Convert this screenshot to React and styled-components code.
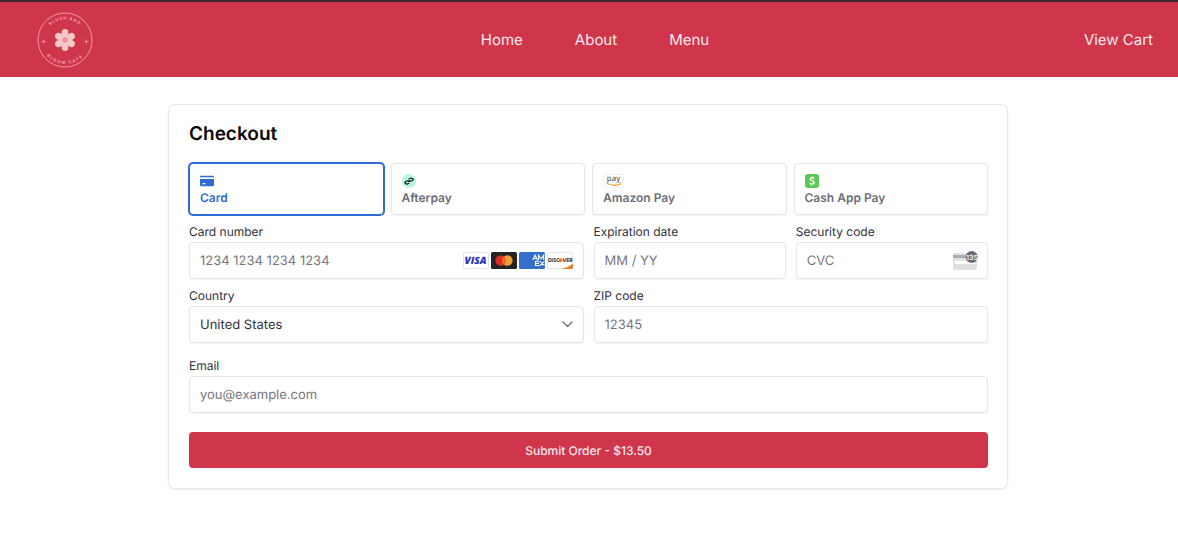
import React, { useState } from 'react';
import styled, { createGlobalStyle } from 'styled-components';

const GlobalStyle = createGlobalStyle`
  * { box-sizing: border-box; }
  body {
    margin: 0;
    background: #fff;
    color: #30313d;
    font-family: Inter, "Liberation Sans", sans-serif;
    text-rendering: geometricPrecision;
  }
  button, input, select { font-family: inherit; text-rendering: inherit; }
`;

const Header = styled.header`
  display: grid;
  grid-template-columns: 1fr auto 1fr;
  align-items: center;
  height: 77px;
  padding: 0 25px 0 37px;
  border-top: 2px solid #3d2b2b;
  background: #cf364b;
`;

const HomeLink = styled.a`
  display: flex;
  justify-self: start;
`;

const Nav = styled.nav`
  display: flex;
  gap: 52px;
`;

const NavLink = styled.a`
  color: #fbe9eb;
  font-size: 15px;
  line-height: 20px;
  text-decoration: none;
`;

const CartLink = styled(NavLink)`
  justify-self: end;
`;

const Main = styled.main`
  padding: 27px 22px 40px 20px;
`;

const CheckoutForm = styled.form`
  max-width: 840px;
  margin: 0 auto;
  padding: 17px 19px 20px 20px;
  border: 1px solid #e8e8ea;
  border-radius: 7px;
  box-shadow: 0 1px 2px rgba(0, 0, 0, 0.08);
`;

const Title = styled.h1`
  margin: 0 0 17px;
  color: #0a0a0a;
  font-size: 19px;
  font-weight: 600;
  line-height: 24px;
`;

const Methods = styled.div`
  display: grid;
  grid-template-columns: repeat(4, 1fr);
  gap: 7px;
  margin-bottom: 9px;
`;

const Method = styled.button`
  display: flex;
  flex-direction: column;
  align-items: flex-start;
  height: 52px;
  padding: 10px 10px 8px;
  border: 1px solid ${(p) => (p.$selected ? '#2f6bd4' : '#e6e6e8')};
  border-radius: 4px;
  background: #fff;
  box-shadow: ${(p) => (p.$selected ? '0 0 0 1px #2f6bd4' : '0 1px 2px rgba(0, 0, 0, 0.05)')};
  color: ${(p) => (p.$selected ? '#2f6bd4' : '#6d6e78')};
  font-size: 12px;
  font-weight: 600;
  line-height: 16px;
  cursor: pointer;

  svg { display: block; margin-bottom: 2px; }
`;

const Fields = styled.div`
  display: grid;
  grid-template-columns: repeat(4, 1fr);
  gap: 9px 10px;
`;

const Field = styled.div`
  grid-column: span ${(p) => p.$span};
  min-width: 0;
  margin-top: ${(p) => (p.$spaced ? '6px' : '0')};
`;

const Label = styled.label`
  display: block;
  margin-bottom: 2px;
  font-size: 12px;
  line-height: 16px;
`;

const Control = styled.div`
  display: flex;
  align-items: center;
  height: 37px;
  padding-right: 10px;
  border: 1px solid #e6e6e8;
  border-radius: 4px;
  box-shadow: 0 1px 2px rgba(0, 0, 0, 0.05);
`;

const TextInput = styled.input`
  flex: 1;
  min-width: 0;
  height: 100%;
  padding: 0 10px;
  border: 0;
  outline: 0;
  background: transparent;
  color: #30313d;
  font-size: 13px;

  &::placeholder { color: #757680; opacity: 1; }
`;

const SelectInput = styled(TextInput).attrs({ as: 'select' })`
  appearance: none;
`;

const Brands = styled.div`
  display: flex;
  gap: 2px;
`;

const Submit = styled.button`
  display: block;
  width: 100%;
  height: 36px;
  margin-top: 19px;
  border: 0;
  border-radius: 4px;
  background: #cf364b;
  color: #fbe9eb;
  font-size: 12px;
  font-weight: 500;
  cursor: pointer;
`;

const Logo = () => (
  <svg width="56" height="56" viewBox="0 0 56 56" fill="none" aria-label="Blush and Bloom Cafe">
    <defs>
      <path id="logo-top" d="M7.500 28a20.500 20.500 0 0 1 41 0" />
      <path id="logo-bottom" d="M4 28a24 24 0 0 0 48 0" />
    </defs>
    <circle cx="28" cy="28" r="27" stroke="#e99aa3" strokeWidth="1" />
    <g fill="#f1b4ba" fontSize="4" fontWeight="600" letterSpacing="1" textAnchor="middle">
      <text><textPath href="#logo-top" startOffset="50%">BLUSH AND</textPath></text>
      <text letterSpacing="1.500"><textPath href="#logo-bottom" startOffset="50%">BLOOM CAFE</textPath></text>
    </g>
    <g fill="#f7c8ca">
      {[0, 60, 120, 180, 240, 300].map((a) => (
        <ellipse key={a} cx="28" cy="21" rx="3.400" ry="4" transform={`rotate(${a} 28 28)`} />
      ))}
      <circle cx="28" cy="28" r="5" />
    </g>
    <circle cx="28" cy="28" r="2.800" fill="#ee9295" />
    <path d="M6.500 27.500v4M4.500 29.500h4M49.500 27.500v4M47.500 29.500h4" stroke="#e98f98" strokeWidth="1" />
  </svg>
);

const CardIcon = () => (
  <svg width="14" height="14" viewBox="0 0 14 14" fill="#2f6bd4">
    <path d="M0 2.800q0-1 1-1h12q1 0 1 1v.5H0zM0 5h14v6q0 1.300-1.300 1.300H1.300Q0 12.300 0 11z" />
    <rect x="2.500" y="9" width="3" height="1.200" rx=".5" fill="#fff" />
  </svg>
);

const AfterpayIcon = () => (
  <svg width="14" height="14" viewBox="0 0 14 14" fill="none">
    <circle cx="7" cy="7" r="7" fill="#b9f5dc" />
    <path
      d="M7.200 8.900 5.600 9.900Q5 10.200 4.400 9.900L3.100 9.100Q2.500 8.600 3.100 8.100L4.900 7Q5.500 6.700 6.100 7L7.600 7.800M6.700 5.200 8.400 4.200Q9 3.900 9.600 4.200L11 5Q11.600 5.500 11 6L9.200 7.100Q8.600 7.400 8 7.100L6.500 6.300"
      stroke="#101820" strokeWidth="1.200" strokeLinejoin="round"
    />
  </svg>
);

const AmazonPayIcon = () => (
  <svg width="21" height="14" viewBox="0 0 21 14" fill="none">
    <rect x=".5" y=".5" width="20" height="13" fill="#fff" stroke="#f1f1f2" />
    <text x="10.500" y="7" textAnchor="middle" fill="#343b45" fontSize="8" fontWeight="500" fontFamily="Open Sans, sans-serif">pay</text>
    <path d="M3.500 9.300q7 3.800 13.500.6" stroke="#f3a03c" strokeWidth="1.100" />
    <path d="m15.700 8.900 2.300-.2-.5 2.300" stroke="#f3a03c" strokeWidth=".8" />
  </svg>
);

const CashAppIcon = () => (
  <svg width="14" height="14" viewBox="0 0 14 14" fill="none">
    <rect width="14" height="14" rx="3" fill="#5bc95a" />
    <path d="M9.300 4.800C8 3.600 5.200 3.500 5.200 5.200c0 1.900 4.100 1.100 4.100 3.200 0 1.900-3.100 2-4.700.6M7.800 2.400l-.4 1.500M6.500 10l-.4 1.600" stroke="#fff" strokeWidth="1.300" />
  </svg>
);

const Visa = () => (
  <svg width="26" height="17" viewBox="0 0 26 17" aria-label="Visa">
    <rect x=".5" y=".5" width="25" height="16" rx="1" fill="#fff" stroke="#e2e3e6" />
    <text x="12.500" y="12.200" textAnchor="middle" fill="#2433bd" fontSize="10" fontWeight="800" fontStyle="italic" fontFamily="Open Sans, sans-serif">VISA</text>
  </svg>
);

const Mastercard = () => (
  <svg width="26" height="17" viewBox="0 0 26 17" aria-label="Mastercard">
    <rect width="26" height="17" rx="1.500" fill="#252525" />
    <circle cx="9.700" cy="8.500" r="5.300" fill="#df2b26" />
    <circle cx="16.300" cy="8.500" r="5.300" fill="#eca13a" />
    <path d="M13 4.350a5.300 5.300 0 0 1 0 8.300 5.300 5.300 0 0 1 0-8.300" fill="#eb6428" />
  </svg>
);

const Amex = () => (
  <svg width="26" height="17" viewBox="0 0 26 17" aria-label="American Express">
    <rect width="26" height="17" rx="1.500" fill="#3470c9" />
    <g fill="none" stroke="#f4f8ff" strokeWidth="1.100">
      <path d="m13.800 8 2.300-5L18.400 8M14.600 6.500h3M19.500 8V3.200l2.600 3.600 2.600-3.600V8" />
      <path d="M20.500 9.300h-4V13.500h4M16.500 11.400h3.500M21 9.300l4.500 4.200M25.500 9.300 21 13.500" />
    </g>
  </svg>
);

const Discover = () => (
  <svg width="26" height="17" viewBox="0 0 26 17" aria-label="Discover">
    <rect x=".5" y=".5" width="25" height="16" rx="1" fill="#fff" stroke="#e2e3e6" />
    <path d="M13.500 17Q21 15.500 26 11.500V16q0 1-1 1z" fill="#e7803b" />
    <g fill="#202020" fontSize="5" fontWeight="700">
      <text x="1" y="10">DISC</text>
      <text x="15.500" y="10">VER</text>
    </g>
    <circle cx="13.800" cy="8.200" r="2" fill="#e98245" />
  </svg>
);

const CvcIcon = () => (
  <svg width="24" height="20" viewBox="0 0 24 20" fill="none" overflow="visible" aria-hidden="true">
    <rect y="2" width="24" height="17" rx="2" fill="#e1e1e3" />
    <path d="M0 4h24v3H0z" fill="#aaaab0" />
    <path d="M2 10h20v3H2z" fill="#fff" />
    <circle cx="18.700" cy="6" r="6" fill="#6a6b76" />
    <text x="19" y="8.500" textAnchor="middle" fill="#fff" fontSize="7" fontWeight="600">135</text>
  </svg>
);

const Chevron = () => (
  <svg width="11" height="7" viewBox="0 0 11 7" fill="none" aria-hidden="true">
    <path d="m1 1 4.500 4.500L10 1" stroke="#6d6e78" strokeWidth="1.400" strokeLinecap="round" strokeLinejoin="round" />
  </svg>
);

const methods = [
  { name: 'Card', Icon: CardIcon },
  { name: 'Afterpay', Icon: AfterpayIcon },
  { name: 'Amazon Pay', Icon: AmazonPayIcon },
  { name: 'Cash App Pay', Icon: CashAppIcon },
];

function InputField({ id, label, span, spaced, placeholder, type = 'text', children }) {
  return (
    <Field $span={span} $spaced={spaced}>
      <Label htmlFor={id}>{label}</Label>
      <Control>
        <TextInput id={id} type={type} placeholder={placeholder} />
        {children}
      </Control>
    </Field>
  );
}

export default function App() {
  const [method, setMethod] = useState('Card');
  return (
    <>
      <GlobalStyle />
      <Header>
        <HomeLink href="#"><Logo /></HomeLink>
        <Nav>
          <NavLink href="#home">Home</NavLink>
          <NavLink href="#about">About</NavLink>
          <NavLink href="#menu">Menu</NavLink>
        </Nav>
        <CartLink href="#cart">View Cart</CartLink>
      </Header>
      <Main>
        <CheckoutForm onSubmit={(e) => e.preventDefault()}>
          <Title>Checkout</Title>
          <Methods>
            {methods.map(({ name, Icon }) => (
              <Method key={name} type="button" $selected={method === name} aria-pressed={method === name} onClick={() => setMethod(name)}>
                <Icon />
                {name}
              </Method>
            ))}
          </Methods>
          <Fields>
            <InputField id="number" label="Card number" span={2} placeholder="1234 1234 1234 1234">
              <Brands><Visa /><Mastercard /><Amex /><Discover /></Brands>
            </InputField>
            <InputField id="expiry" label="Expiration date" span={1} placeholder="MM / YY" />
            <InputField id="cvc" label="Security code" span={1} placeholder="CVC">
              <CvcIcon />
            </InputField>
            <Field $span={2}>
              <Label htmlFor="country">Country</Label>
              <Control>
                <SelectInput id="country" defaultValue="US">
                  <option value="US">United States</option>
                </SelectInput>
                <Chevron />
              </Control>
            </Field>
            <InputField id="zip" label="ZIP code" span={2} placeholder="12345" />
            <InputField id="email" label="Email" type="email" span={4} spaced placeholder="you@example.com" />
          </Fields>
          <Submit type="submit">Submit Order - $13.50</Submit>
        </CheckoutForm>
      </Main>
    </>
  );
}
